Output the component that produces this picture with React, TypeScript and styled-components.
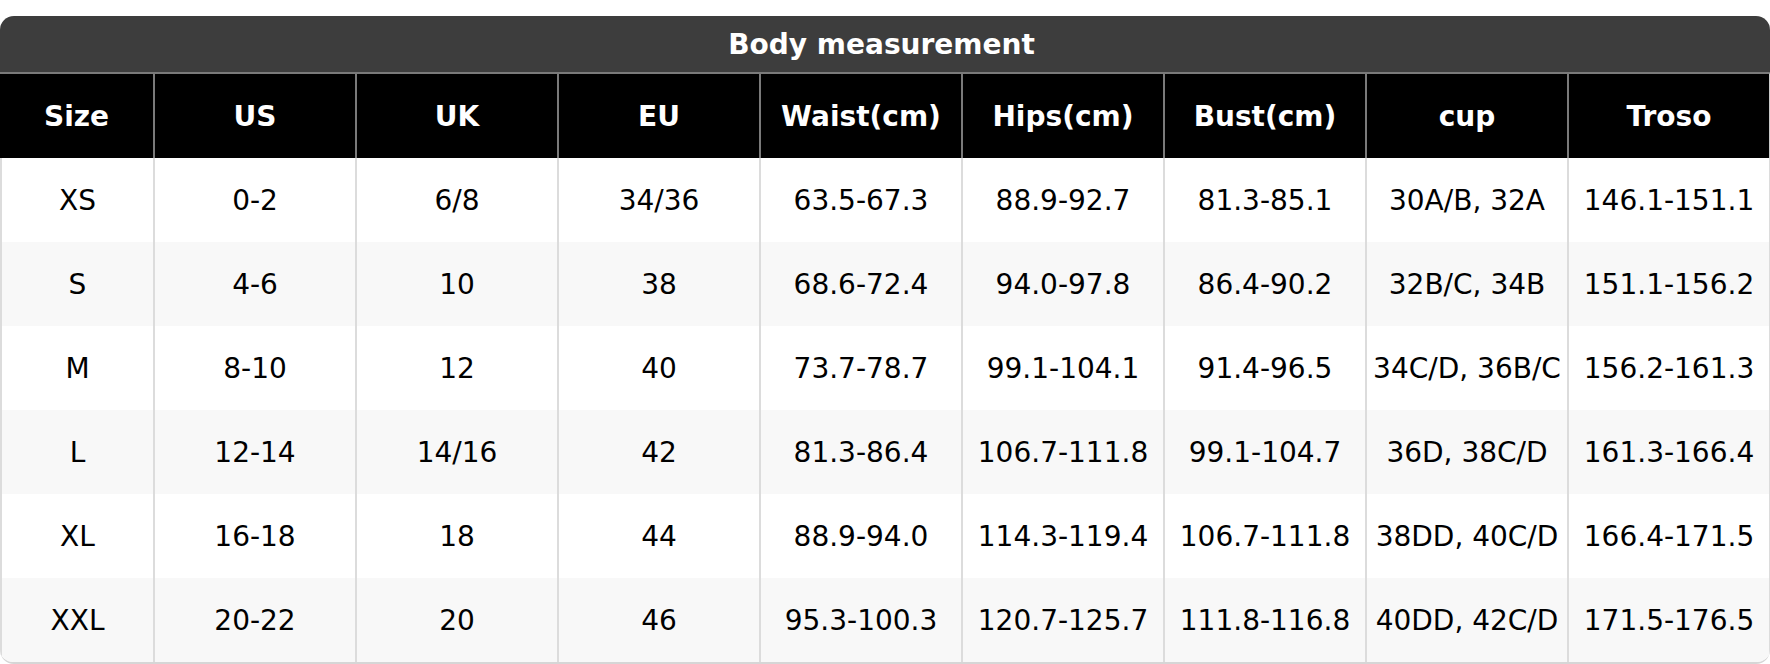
import React from 'react';
import styled, { createGlobalStyle } from 'styled-components';

const GlobalStyle = createGlobalStyle`
	html, body {
		margin: 0;
		padding: 0;
		background: #ffffff;
	}
	body {
		font-family: 'DejaVu Sans', Verdana, sans-serif;
	}
`;

const columns = ['Size', 'US', 'UK', 'EU', 'Waist(cm)', 'Hips(cm)', 'Bust(cm)', 'cup', 'Troso'];

const rows = [
	['XS', '0-2', '6/8', '34/36', '63.5-67.3', '88.9-92.7', '81.3-85.1', '30A/B, 32A', '146.1-151.1'],
	['S', '4-6', '10', '38', '68.6-72.4', '94.0-97.8', '86.4-90.2', '32B/C, 34B', '151.1-156.2'],
	['M', '8-10', '12', '40', '73.7-78.7', '99.1-104.1', '91.4-96.5', '34C/D, 36B/C', '156.2-161.3'],
	['L', '12-14', '14/16', '42', '81.3-86.4', '106.7-111.8', '99.1-104.7', '36D, 38C/D', '161.3-166.4'],
	['XL', '16-18', '18', '44', '88.9-94.0', '114.3-119.4', '106.7-111.8', '38DD, 40C/D', '166.4-171.5'],
	['XXL', '20-22', '20', '46', '95.3-100.3', '120.7-125.7', '111.8-116.8', '40DD, 42C/D', '171.5-176.5'],
];

export default function App() {
	return (
		<>
			<GlobalStyle />
			<Card>
				<Title>Body measurement</Title>
				<Table>
					<colgroup>
						{columns.map((el, i) => (
							<col key={i} style={{ width: i === 0 ? 155 : 202 }} />
						))}
					</colgroup>
					<thead>
						<tr>
							{columns.map((el, i) => (
								<HeadCell key={i}>{el}</HeadCell>
							))}
						</tr>
					</thead>
					<tbody>
						{rows.map((row, i) => (
							<Row key={i} $striped={i % 2 === 1}>
								{row.map((cell, j) => (
									<Cell key={j}>{cell}</Cell>
								))}
							</Row>
						))}
					</tbody>
				</Table>
			</Card>
		</>
	);
}

const Card = styled.div`
	margin-top: 16px;
	width: 1770px;
	box-sizing: border-box;
	border-radius: 14px;
	overflow: hidden;
	border-bottom: 2px solid #d6d6d6;
	background: #fff;
`;

const Title = styled.div`
	height: 56px;
	padding-right: 7px;
	display: flex;
	align-items: center;
	justify-content: center;
	background: #3d3d3d;
	color: #fff;
	font-size: 28px;
	font-weight: 700;
`;

const Table = styled.table`
	width: 100%;
	table-layout: fixed;
	border-collapse: separate;
	border-spacing: 0;
`;

const HeadCell = styled.th`
	height: 86px;
	padding: 0;
	box-sizing: border-box;
	background: #000;
	color: #fff;
	font-size: 28px;
	font-weight: 700;
	text-align: center;
	border-top: 2px solid #7a7a7a;
	border-right: 2px solid #7a7a7a;

	&:last-child {
		border-right-color: #c8c8c8;
	}
`;

const Row = styled.tr<{ $striped: boolean }>`
	background: ${({ $striped }) => ($striped ? '#f8f8f8' : '#ffffff')};
`;

const Cell = styled.td`
	height: 84px;
	padding: 0;
	box-sizing: border-box;
	color: #000;
	font-size: 28px;
	text-align: center;
	white-space: nowrap;
	border-right: 2px solid #dcdcdc;

	&:first-child {
		border-left: 2px solid #dcdcdc;
	}
`;
